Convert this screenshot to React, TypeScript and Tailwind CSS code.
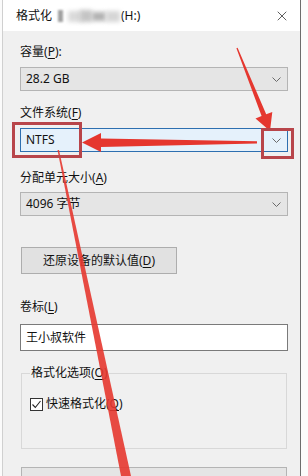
import { X } from 'lucide-react';

const font = { fontFamily: '"Noto Sans", "Noto Sans CJK SC", sans-serif' };

function Chevron() {
  return (
    <svg width="9" height="5" viewBox="0 0 9 5" className="shrink-0 mr-[1px]">
      <path d="M0.5 0.5 L4.5 4.5 L8.5 0.5" fill="none" stroke="#6a6a6a" strokeWidth="1" />
    </svg>
  );
}

function Label({ text, k, tail = '' }: { text: string; k: string; tail?: string }) {
  return (
    <div className="h-4 leading-4 text-[12px] text-[#111]">
      {text}(<span className="underline underline-offset-2">{k}</span>){tail}
    </div>
  );
}

function Select({ value, active = false }: { value: string; active?: boolean }) {
  return (
    <div
      className={`h-6 flex items-center justify-between pl-[5px] pr-[5px] text-[12px] text-[#111] border ${
        active ? 'bg-[#e5f1fb] border-[#2d6fb0]' : 'bg-[#e5e5e5] border-[#b4b4b4]'
      }`}
    >
      <span>{value}</span>
      <Chevron />
    </div>
  );
}

function Overlay() {
  const red = '#e5372f';
  const box = '#b8454a';
  return (
    <svg className="absolute left-0 top-0 pointer-events-none" width="308" height="476" viewBox="0 0 308 476">
      {/* long thin line */}
      <polygon points="57.5,150 59,150 131,476 121,476" fill={red} opacity="0.9" />
      {/* horizontal arrow */}
      <polygon points="257,141.3 101,138.5 101,133 82,142.5 101,152 101,147 257,143.5" fill={red} />
      {/* top arrow */}
      <polygon points="236.4,48.3 261.6,116.1 255.5,118.4 270,131 272.3,111.9 266.2,114.3 237.6,47.7" fill={red} />
      <rect x="13.5" y="123.5" width="67" height="33" fill="none" stroke={box} strokeWidth="3" />
      <rect x="262.5" y="129.5" width="30" height="28" fill="none" stroke={box} strokeWidth="3" />
    </svg>
  );
}

export default function App() {
  return (
    <div className="relative w-[308px] h-[476px] overflow-hidden bg-[#fbfbfb]" style={font}>
      <div className="ml-[2px] w-[299px] h-[476px] flex flex-col border-l border-l-[#d0d0d0] border-r border-r-[#6c6c6c] bg-[#f0f0f0]">
        {/* title bar */}
        <div className="h-[31px] shrink-0 bg-white flex items-center pl-[13px] pr-[8px]">
          <span className="text-[12px] text-[#111]">格式化</span>
          <div className="relative ml-[6px] w-[62px] h-[14px]">
            <div className="absolute left-0 top-[1px] w-[5px] h-[12px] bg-[#a0a0a0] blur-[1px]" />
            <div className="absolute left-[10px] top-[2px] w-[14px] h-[11px] bg-[#dadada] blur-[2px]" />
            <div className="absolute left-[22px] top-[1px] w-[12px] h-[12px] bg-[#c4c4c4] blur-[2px]" />
            <div className="absolute left-[34px] top-[3px] w-[14px] h-[9px] bg-[#b2b2b2] blur-[2px]" />
            <div className="absolute left-[48px] top-[2px] w-[14px] h-[11px] bg-[#d6d6d6] blur-[2px]" />
          </div>
          <span className="text-[12px] text-[#111] ml-[1px]">(H:)</span>
          <X className="ml-auto mr-[2px]" size={16} strokeWidth={1.1} color="#222" />
        </div>

        <div className="flex flex-col pl-[17px] pr-[12px]">
          <div className="mt-[13px]"><Label text="容量" k="P" tail=":" /></div>
          <div className="mt-[7px]"><Select value="28.2 GB" /></div>

          <div className="mt-[14px]"><Label text="文件系统" k="F" /></div>
          <div className="mt-[7px]"><Select value="NTFS" active /></div>

          <div className="mt-[18px]"><Label text="分配单元大小" k="A" /></div>
          <div className="mt-[6px]"><Select value="4096 字节" /></div>

          <button className="mt-[31px] ml-[1px] w-[156px] h-[27px] bg-[#e1e1e1] border border-[#adadad] text-[12px] text-[#111]">
            还原设备的默认值(<span className="underline underline-offset-2">D</span>)
          </button>

          <div className="mt-[25px]"><Label text="卷标" k="L" /></div>
          <div className="mt-[9px] h-[27px] bg-white border border-[#7a7a7a] flex items-center pl-[5px] text-[12px] text-[#111]">
            王小叔软件
          </div>

          <fieldset className="mt-[14px] ml-[1px] mr-[1px] h-[84px] border border-[#d8d8d8] px-[8px]">
            <legend className="px-[1px] text-[12px] leading-4 text-[#111]">
              格式化选项(<span className="underline underline-offset-2">O</span>)
            </legend>
            <div className="mt-[15px] flex items-center gap-[3px]">
              <div className="w-[13px] h-[13px] border border-[#333] bg-white flex items-center justify-center">
                <svg width="11" height="11" viewBox="0 0 11 11">
                  <path d="M1.5 5.5 L4.3 8.5 L9.5 2" fill="none" stroke="#222" strokeWidth="1.1" />
                </svg>
              </div>
              <span className="text-[12px] leading-4 text-[#111]">
                快速格式化(<span className="underline underline-offset-2">Q</span>)
              </span>
            </div>
          </fieldset>

          <div className="mt-[18px] ml-[1px] mr-[1px] h-[30px] bg-[#e5e5e5] border border-[#b4b4b4]" />
        </div>
      </div>
      <Overlay />
    </div>
  );
}
